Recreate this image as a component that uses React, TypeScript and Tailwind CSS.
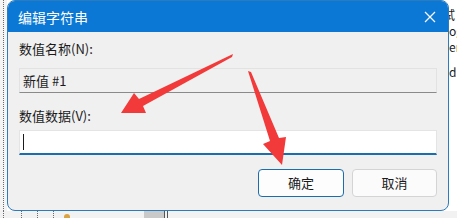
import React from "react";

const font = { fontFamily: '"Microsoft YaHei", "Noto Sans CJK SC", "Noto Sans", sans-serif' };

function Arrows() {
  return (
    <svg className="absolute inset-0 pointer-events-none" width="457" height="218" viewBox="0 0 457 218">
      <polygon
        points="233,54 139,99 134,93 121,113 146,113 143,106 232,57"
        fill="#f23a3a"
      />
      <polygon
        points="248,71 270,141 263,144 282,165 286,137 279,138 251,72"
        fill="#f23a3a"
      />
    </svg>
  );
}

function EditStringDialog() {
  return (
    <div className="w-[442px] h-[211px] flex flex-col border border-[#2b7bbd] rounded-lg overflow-hidden bg-[#f0f0f0]">
      <div className="h-[31px] shrink-0 bg-[#0a78d4] flex items-center justify-between pl-[10px] pr-[8px]">
        <span className="text-white text-[14px] leading-none">编辑字符串</span>
        <svg width="12" height="12" viewBox="0 0 12 12" className="mr-[4px]">
          <path d="M1 1 L11 11 M11 1 L1 11" stroke="#ffffff" strokeWidth="1.2" />
        </svg>
      </div>
      <div className="flex flex-col px-[11px] pt-[8px] text-[13px] text-[#1b1b1b]">
        <div className="leading-[18px]">数值名称(N):</div>
        <div className="mt-[10px] h-[25px] flex items-center pl-[3px] bg-[#f0f0f0] border border-[#e2e2e2] border-b-[#8a8a8a]">
          新值 #1
        </div>
        <div className="mt-[14px] leading-[18px]">数值数据(V):</div>
        <div className="mt-[5px] h-[25px] flex items-center pl-[3px] bg-white border border-[#e4e4e4] border-b-2 border-b-[#1a6ead]">
          <span className="w-[1px] h-[16px] bg-[#1b1b1b]" />
        </div>
        <div className="mt-[14px] flex justify-end gap-[8px]">
          <button className="w-[86px] h-[28px] rounded-[4px] bg-[#fdfdfd] border border-[#1a6ead] text-[13px] text-[#1b1b1b]">
            确定
          </button>
          <button className="w-[85px] h-[28px] rounded-[4px] bg-[#fbfbfb] border border-[#d4d4d4] text-[13px] text-[#1b1b1b]">
            取消
          </button>
        </div>
      </div>
    </div>
  );
}

export default function App() {
  return (
    <div className="relative w-[457px] h-[218px] overflow-hidden bg-white" style={font}>
      <div className="flex">
        <div className="w-[7px] h-[211px] bg-[#f4f4f4] flex">
          <div className="ml-[3px] h-full border-l border-dotted border-[#6b6b6b]" />
        </div>
        <EditStringDialog />
        <div className="w-[8px] overflow-hidden text-[12px] text-[#1b1b1b] leading-[16px] pt-[7px]">
          <div className="ml-[-6px] whitespace-nowrap">试</div>
          <div className="whitespace-nowrap">og</div>
          <div className="whitespace-nowrap">er</div>
          <div className="whitespace-nowrap mt-[9px]">d</div>
        </div>
      </div>
      <div className="h-[7px] flex bg-[#f2f2f2]">
        <div className="ml-[3px] h-full border-l border-dotted border-[#6b6b6b]" />
        <div className="ml-[17px] h-full border-l border-dotted border-[#6b6b6b]" />
        <div className="ml-[15px] h-full border-l border-dotted border-[#6b6b6b]" />
        <div className="ml-[15px] h-full border-l border-dotted border-[#6b6b6b]" />
        <div className="ml-[10px] mt-[3px] w-[6px] h-[4px] rounded-t-full bg-[#d9a441]" />
        <div className="ml-[74px] w-[20px] h-full bg-[#c9c9c9]" />
        <div className="w-[1px] h-full bg-[#555]" />
        <div className="ml-[2px] w-[1px] h-full bg-[#555]" />
      </div>
      <Arrows />
    </div>
  );
}
